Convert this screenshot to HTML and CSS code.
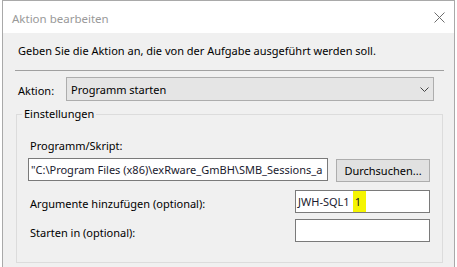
FILE: index.html
```html
<!DOCTYPE html>
<html lang="de">
<head>
    <meta charset="UTF-8">
    <title>Aktion bearbeiten</title>
    <link rel="stylesheet" href="styles.css">
</head>
<body>
    <div class="window">
        <div class="titlebar">
            <span class="title">Aktion bearbeiten</span>
            <svg class="close" width="11" height="11" viewBox="0 0 11 11">
                <path d="M0.5 0.5 L10.5 10.5 M10.5 0.5 L0.5 10.5" stroke="#6d6d6d" stroke-width="1" fill="none"/>
            </svg>
        </div>
        <div class="content">
            <p class="intro">Geben Sie die Aktion an, die von der Aufgabe ausgeführt werden soll.</p>
            <div class="separator"></div>

            <div class="action-row">
                <label class="action-label">Aktion:</label>
                <div class="combo">
                    <span>Programm starten</span>
                    <svg width="9" height="5" viewBox="0 0 9 5">
                        <path d="M0.5 0.5 L4.5 4.5 L8.5 0.5" stroke="#444" stroke-width="1" fill="none"/>
                    </svg>
                </div>
            </div>

            <fieldset class="settings">
                <legend>Einstellungen</legend>

                <div class="field-label">Programm/Skript:</div>
                <div class="program-row">
                    <div class="textbox program">"C:\Program Files (x86)\exRware_GmBH\SMB_Sessions_a</div>
                    <button class="browse">Durchsuchen...</button>
                </div>

                <div class="option-row">
                    <span class="option-label">Argumente hinzufügen (optional):</span>
                    <div class="textbox small">JWH-SQL1<span class="mark">1</span></div>
                </div>
                <div class="option-row">
                    <span class="option-label">Starten in (optional):</span>
                    <div class="textbox small"></div>
                </div>
            </fieldset>
        </div>
    </div>
</body>
</html>
```

FILE: styles.css
```css
body {
    margin: 0;
    padding: 0;
    background: #fff;
    font-family: "Noto Sans", "Open Sans", sans-serif;
    font-size: 11px;
    color: #000;
    overflow: hidden;
}

.window {
    margin-left: 2px;
    width: 451px;
    height: 266px;
    border: 1px solid #a9a9a9;
    border-bottom: none;
    background: #f0f0f0;
    overflow: hidden;
}

.titlebar {
    height: 32px;
    background: #fff;
    display: flex;
    align-items: center;
    justify-content: space-between;
    padding: 2px 9px 0 9px;
    box-sizing: border-box;
}

.title {
    color: #999;
    font-size: 11.5px;
}

.close {
    margin-top: -1px;
}

.content {
    padding-top: 10px;
}

.intro {
    margin: 0 0 0 15px;
    line-height: 16px;
}

.separator {
    height: 1px;
    background: #a0a0a0;
    margin: 11px 10px 0 12px;
}

.action-row {
    display: flex;
    align-items: center;
    margin-top: 6px;
    padding-left: 15px;
}

.action-label {
    width: 48px;
    padding-top: 3px;
}

.combo {
    height: 22px;
    border: 1px solid #adadad;
    background: #e5e5e5;
    display: flex;
    align-items: center;
    justify-content: space-between;
    padding: 0 4px 0 4px;
    width: 358px;
}

.settings {
    margin: 5px 11px 0 13px;
    padding: 0 0 20px 0;
    border: 1px solid #dcdcdc;
}

.settings legend {
    margin-left: 5px;
    padding: 0 2px;
    line-height: 16px;
}

.field-label {
    margin: 16px 0 0 13px;
    line-height: 16px;
}

.program-row {
    display: flex;
    align-items: flex-start;
    margin: 4px 0 0 11px;
}

.textbox {
    background: #fff;
    border: 1px solid #7a7a7a;
    height: 21px;
    line-height: 21px;
    padding: 0 2px;
    white-space: nowrap;
    overflow: hidden;
    color: #1a1a2e;
}

.textbox.program {
    width: 294px;
}

.browse {
    margin: 1px 0 0 8px;
    width: 94px;
    height: 23px;
    border: 1px solid #adadad;
    background: #e1e1e1;
    font: inherit;
    color: #000;
    padding: 0;
}

.option-row {
    display: flex;
    justify-content: space-between;
    align-items: center;
    margin: 8px 12px 0 13px;
}

.option-row + .option-row {
    margin-top: 6px;
}

.option-label {
    padding-top: 4px;
}

.textbox.small {
    width: 129px;
}

.mark {
    background: #f5f500;
    margin-left: 3px;
    padding: 4px 5px 3px 2px;
}
```
